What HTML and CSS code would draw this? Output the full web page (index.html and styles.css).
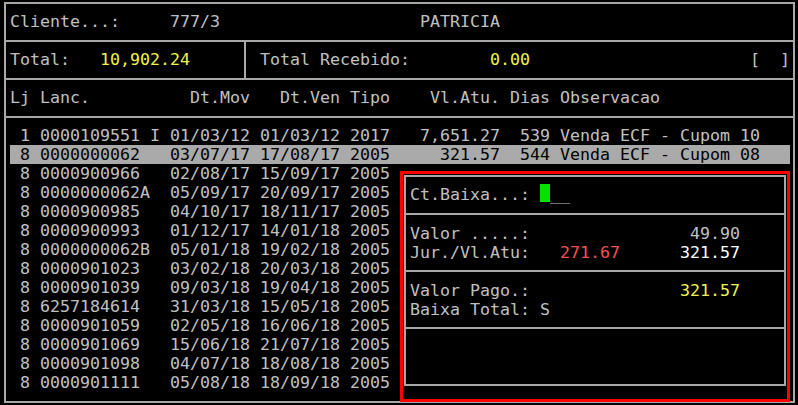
FILE: index.html
```html
<!DOCTYPE html>
<html lang="pt">
<head>
    <meta charset="UTF-8">
    <title>Baixa de Titulos</title>
    <link rel="stylesheet" href="styles.css">
</head>
<body>
<div class="screen">
    <div class="frame">
        <div class="sect">
            <div class="line">Cliente...:     777/3                    PATRICIA</div>
        </div>
        <div class="sect totals">
            <div class="cell left">
                <div class="line">Total:   <span class="yellow">10,902.24</span></div>
            </div>
            <div class="cell right">
                <div class="line">Total Recebido:        <span class="yellow">0.00</span>                      [  ]</div>
            </div>
        </div>
        <div class="sect">
            <div class="line">Lj Lanc.          Dt.Mov   Dt.Ven Tipo    Vl.Atu. Dias Observacao</div>
        </div>
        <div class="rows">
            <div class="row"> 1 0000109551 I 01/03/12 01/03/12 2017   7,651.27  539 Venda ECF - Cupom 10</div>
            <div class="row selected"> 8 0000000062   03/07/17 17/08/17 2005     321.57  544 Venda ECF - Cupom 08</div>
            <div class="row"> 8 0000900966   02/08/17 15/09/17 2005</div>
            <div class="row"> 8 0000000062A  05/09/17 20/09/17 2005</div>
            <div class="row"> 8 0000900985   04/10/17 18/11/17 2005</div>
            <div class="row"> 8 0000900993   01/12/17 14/01/18 2005</div>
            <div class="row"> 8 0000000062B  05/01/18 19/02/18 2005</div>
            <div class="row"> 8 0000901023   03/02/18 20/03/18 2005</div>
            <div class="row"> 8 0000901039   09/03/18 19/04/18 2005</div>
            <div class="row"> 8 6257184614   31/03/18 15/05/18 2005</div>
            <div class="row"> 8 0000901059   02/05/18 16/06/18 2005</div>
            <div class="row"> 8 0000901069   15/06/18 21/07/18 2005</div>
            <div class="row"> 8 0000901098   04/07/18 18/08/18 2005</div>
            <div class="row"> 8 0000901111   05/08/18 18/09/18 2005</div>
        </div>
    </div>

    <div class="popup">
        <div class="pbox">
            <div class="psect single">
                <div class="line">Ct.Baixa...: <span class="cursor"></span>__</div>
            </div>
            <div class="psect">
                <div class="line">Valor .....:                49.90</div>
                <div class="line">Jur./Vl.Atu:   <span class="red">271.67</span>      <span class="white">321.57</span></div>
            </div>
            <div class="psect">
                <div class="line">Valor Pago.:               <span class="yellow">321.57</span></div>
                <div class="line">Baixa Total: S</div>
            </div>
            <div class="psect last"></div>
        </div>
    </div>
</div>
</body>
</html>
```

FILE: styles.css
```css
body {
    margin: 0;
    background: #000;
    color: #c0c0c0;
    font-family: "DejaVu Sans Mono", "Liberation Mono", monospace;
    font-size: 16.61px;
    overflow: hidden;
}
.screen {
    position: relative;
    width: 798px;
    height: 405px;
}
.frame {
    margin: 2px 0 0 4px;
    width: 791px;
    height: 401px;
    box-sizing: border-box;
    border: 2px solid #a8a8a8;
    display: flex;
    flex-direction: column;
}
.sect {
    height: 38px;
    box-sizing: border-box;
    border-bottom: 2px solid #a8a8a8;
    padding-left: 4px;
    flex-shrink: 0;
}
.line {
    white-space: pre;
    line-height: 19px;
}
.sect .line {
    line-height: 36px;
}
.totals {
    display: flex;
    padding-left: 0;
}
.cell.left {
    width: 240px;
    box-sizing: border-box;
    padding-left: 4px;
    border-right: 2px solid #a8a8a8;
}
.cell.right {
    padding-left: 14px;
}
.rows {
    padding: 8px 0 0 4px;
}
.row {
    white-space: pre;
    height: 19px;
    line-height: 19px;
    width: 780px;
}
.row.selected {
    background: #aaaaaa;
    color: #000;
}
.yellow { color: #f2f24e; }
.red { color: #f05252; }
.white { color: #fff; }

/* dialog box over the list */
.popup {
    position: absolute;
    left: 400px;
    top: 169px;
    width: 390px;
    height: 231px;
    box-sizing: border-box;
    border: 3px solid #ff0000;
    padding: 1px 1px 13px 1px;
    background: #000;
}
.pbox {
    height: 100%;
    box-sizing: border-box;
    border: 2px solid #a8a8a8;
}
.psect {
    height: 57px;
    box-sizing: border-box;
    border-bottom: 2px solid #a8a8a8;
    padding: 8.5px 0 0 4px;
}
.psect.single {
    height: 38px;
    padding-top: 0;
}
.psect.single .line {
    line-height: 36px;
}
.psect.last {
    height: 55px;
    border-bottom: none;
}
.cursor {
    display: inline-block;
    width: 10px;
    height: 18px;
    background: #00e400;
    vertical-align: -2px;
}
```
